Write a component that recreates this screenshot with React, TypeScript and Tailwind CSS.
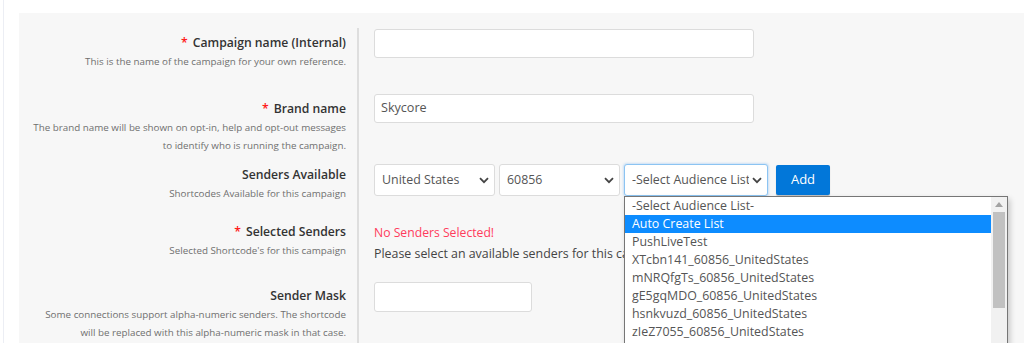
import React from 'react';

// --- UI COMPONENTS ---

const Label: React.FC<{ title: string; required?: boolean; lines: string[] }> = ({ title, required, lines }) => (
    <div className="text-right pr-[11px]">
        <div className="text-[12.2px] leading-[20px] font-semibold text-[#333]">
            {required && <span className="text-[#ff1a1a] mr-[5px]">*</span>}
            {title}
        </div>
        {lines.map(line => (
            <div key={line} className="text-[9.8px] leading-[18px] text-[#6f6f6f]">{line}</div>
        ))}
    </div>
);

const Chevron: React.FC = () => (
    <svg width="10" height="7" viewBox="0 0 10 7" className="flex-shrink-0">
        <path d="M1 1.2 L5 5.2 L9 1.2" fill="none" stroke="#444" strokeWidth="1.8" />
    </svg>
);

const FakeSelect: React.FC<{ value: string; width: string; focused?: boolean }> = ({ value, width, focused }) => (
    <div
        className={`${width} h-[32px] bg-white rounded-[3px] border flex items-center pl-[7px] pr-[5px] gap-[3px] ${
            focused ? 'border-[#8cc4f2] shadow-[0_0_2px_1px_rgba(120,180,240,0.35)]' : 'border-[#dcdcdc]'
        }`}
    >
        <span className="flex-1 text-[12.4px] text-[#555] whitespace-nowrap overflow-hidden">{value}</span>
        <Chevron />
    </div>
);

const AUDIENCE_OPTIONS = [
    '-Select Audience List-',
    'Auto Create List',
    'PushLiveTest',
    'XTcbn141_60856_UnitedStates',
    'mNRQfgTs_60856_UnitedStates',
    'gE5gqMDO_60856_UnitedStates',
    'hsnkvuzd_60856_UnitedStates',
    'zIeZ7055_60856_UnitedStates',
    'qWr8xLpa_60856_UnitedStates',
];

const AudienceDropdown: React.FC = () => (
    <div className="absolute left-0 top-[32px] w-[384px] h-[160px] bg-white border border-[#767676] shadow-[2px_3px_6px_rgba(0,0,0,0.2)] flex z-20">
        <div className="flex-1 overflow-hidden">
            {AUDIENCE_OPTIONS.map((opt, i) => (
                <div
                    key={opt}
                    className={`h-[18px] leading-[18px] pl-[7px] text-[12.4px] whitespace-nowrap ${
                        i === 1 ? 'bg-[#0d8cff] text-white' : 'text-[#555]'
                    }`}
                >
                    {opt}
                </div>
            ))}
        </div>
        <div className="w-[16px] bg-[#f1f1f1] flex flex-col items-center">
            <svg width="8" height="5" viewBox="0 0 8 5" className="mt-[5px]">
                <path d="M0 5 L4 0 L8 5 Z" fill="#a3a3a3" />
            </svg>
            <div className="w-[12px] h-[96px] bg-[#c1c1c1] mt-[5px]"></div>
        </div>
    </div>
);

const TextInput: React.FC<{ width: string; value?: string }> = ({ width, value }) => (
    <div className={`${width} h-[29px] bg-white border border-[#dcdcdc] rounded-[3px] flex items-center pl-[6px] text-[12.6px] text-[#555]`}>
        {value}
    </div>
);

// --- MAIN ---

export default function App() {
    return (
        <div className="w-[1024px] h-[343px] overflow-hidden bg-white flex" style={{ fontFamily: '"Open Sans", "Noto Sans", sans-serif' }}>
            <div className="w-[3px] flex-shrink-0"></div>
            <div className="w-[1px] flex-shrink-0 bg-[#eceef4]"></div>
            <div className="flex-1 pl-[15px] pt-[13px]">
                <div className="h-full bg-[#f7f7f7] pt-[15px] flex flex-col">
                    {/* Campaign name */}
                    <div className="flex h-[66px]">
                        <div className="w-[340px] border-r-2 border-[#dedede] pt-[5px]">
                            <Label title="Campaign name (Internal)" required lines={['This is the name of the campaign for your own reference.']} />
                        </div>
                        <div className="pl-[15px] pt-[1px]">
                            <TextInput width="w-[380px]" />
                        </div>
                    </div>

                    {/* Brand name */}
                    <div className="flex h-[70px]">
                        <div className="w-[340px] border-r-2 border-[#dedede] pt-[5px]">
                            <Label
                                title="Brand name"
                                required
                                lines={[
                                    'The brand name will be shown on opt-in, help and opt-out messages',
                                    'to identify who is running the campaign.',
                                ]}
                            />
                        </div>
                        <div className="pl-[15px]">
                            <TextInput width="w-[380px]" value="Skycore" />
                        </div>
                    </div>

                    {/* Senders available */}
                    <div className="flex h-[58px] relative z-10">
                        <div className="w-[340px] border-r-2 border-[#dedede] pt-[1px]">
                            <Label title="Senders Available" lines={['Shortcodes Available for this campaign']} />
                        </div>
                        <div className="pl-[15px] flex items-start">
                            <FakeSelect value="United States" width="w-[121px]" />
                            <div className="ml-[4px]">
                                <FakeSelect value="60856" width="w-[121px]" />
                            </div>
                            <div className="ml-[4px] relative">
                                <FakeSelect value="-Select Audience List-" width="w-[144px]" focused />
                                <AudienceDropdown />
                            </div>
                            <button className="ml-[8px] mt-[1px] w-[54px] h-[30px] bg-[#0277d9] text-white text-[13px] rounded-[2px] shadow-[0_1px_1px_rgba(0,0,0,0.25)]">
                                Add
                            </button>
                        </div>
                    </div>

                    {/* Selected senders */}
                    <div className="flex h-[60px]">
                        <div className="w-[340px] border-r-2 border-[#dedede]">
                            <Label title="Selected Senders" required lines={["Selected Shortcode's for this campaign"]} />
                        </div>
                        <div className="pl-[15px]">
                            <div className="text-[12.2px] leading-[22px] text-[#ff3b5c]">No Senders Selected!</div>
                            <div className="text-[12.4px] leading-[20px] text-[#444] whitespace-nowrap">
                                Please select an available senders for this campaign.
                            </div>
                        </div>
                    </div>

                    {/* Sender mask */}
                    <div className="flex flex-1">
                        <div className="w-[340px] border-r-2 border-[#dedede] pt-[4px]">
                            <Label
                                title="Sender Mask"
                                lines={[
                                    'Some connections support alpha-numeric senders. The shortcode',
                                    'will be replaced with this alpha-numeric mask in that case.',
                                ]}
                            />
                        </div>
                        <div className="pl-[15px]">
                            <div className="w-[158px] h-[30px] bg-white border border-[#dcdcdc] rounded-[3px]"></div>
                        </div>
                    </div>
                </div>
            </div>
        </div>
    );
}
